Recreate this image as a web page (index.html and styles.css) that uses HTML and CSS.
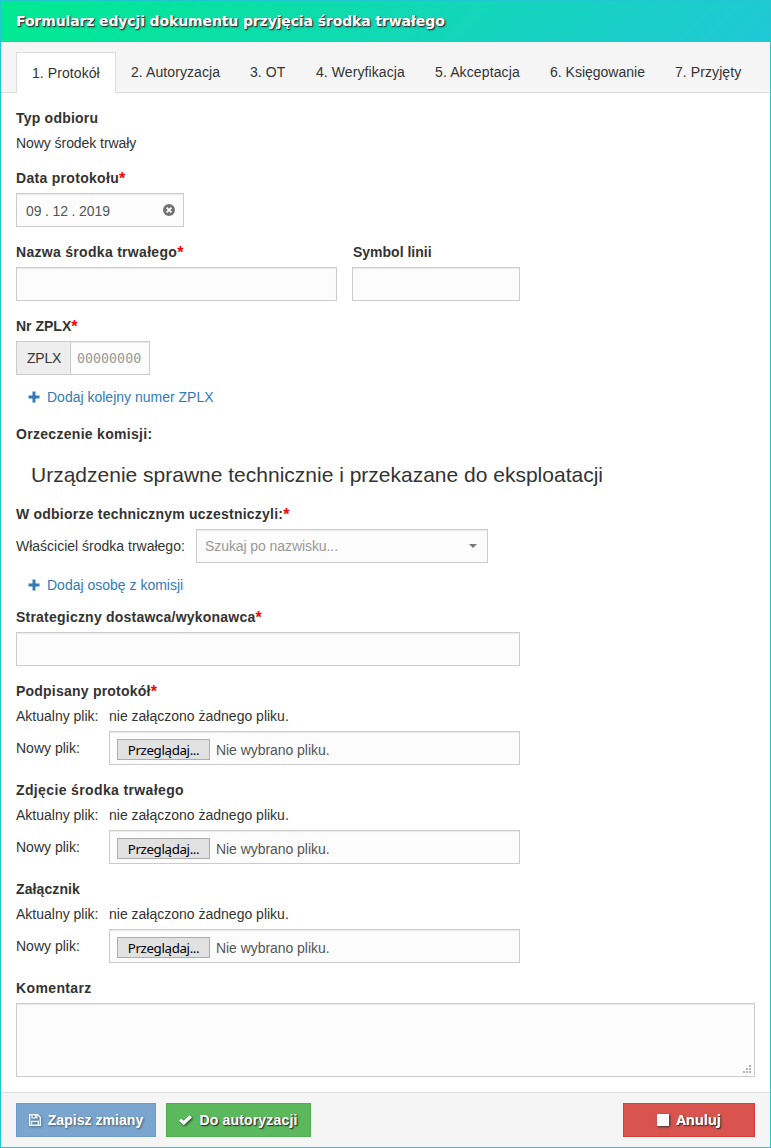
FILE: index.html
```html
<!DOCTYPE html>
<html lang="pl">
<head>
<meta charset="utf-8">
<title>Formularz edycji dokumentu</title>
<link rel="stylesheet" href="styles.css">
</head>
<body>
<form class="panel">
  <header class="panel-heading"><span class="t-title">Formularz edycji dokumentu przyjęcia środka trwałego</span></header>
  <nav class="tabs">
    <a class="tab active">1. Protokół</a>
    <a class="tab">2. Autoryzacja</a>
    <a class="tab ot">3. OT</a>
    <a class="tab">4. Weryfikacja</a>
    <a class="tab accept">5. Akceptacja</a>
    <a class="tab booking">6. Księgowanie</a>
    <a class="tab last">7. Przyjęty</a>
  </nav>
  <main class="panel-body">
    <section class="group">
      <div class="label snug">Typ odbioru</div>
      <div class="static">Nowy środek trwały</div>
    </section>
    <section class="group">
      <div class="label">Data protokołu<b class="req">*</b></div>
      <div class="control date">
        <span class="date-value">09<i>.</i>12<i>.</i>2019</span>
        <svg width="12" height="12" viewBox="0 0 12 12"><circle cx="6" cy="6" r="6" fill="#737373"/><path d="M3.600 3.600l4.800 4.800M8.400 3.600l-4.800 4.800" stroke="#fcfcfc" stroke-width="1.800"/></svg>
      </div>
    </section>
    <div class="columns">
      <section class="group wide">
        <div class="label">Nazwa środka trwałego<b class="req">*</b></div>
        <div class="control"></div>
      </section>
      <section class="group narrow">
        <div class="label symbol">Symbol linii</div>
        <div class="control"></div>
      </section>
    </div>
    <section class="group zplx">
      <div class="label nr">Nr ZPLX<b class="req">*</b></div>
      <div class="input-group">
        <span class="addon">ZPLX</span>
        <div class="control mono">00000000</div>
      </div>
      <a class="link"><svg width="12" height="12" viewBox="0 0 12 12"><path d="M4.500 0.500h3v4h4v3h-4v4h-3v-4h-4v-3h4z" fill="#337ab7"/></svg><span>Dodaj kolejny numer ZPLX</span></a>
    </section>
    <section class="verdict">
      <div class="label">Orzeczenie komisji:</div>
      <p class="lead">Urządzenie sprawne technicznie i przekazane do eksploatacji</p>
    </section>
    <section class="people">
      <div class="label snug">W odbiorze technicznym uczestniczyli:<b class="req">*</b></div>
      <div class="owner">
        <span class="owner-name">Właściciel środka trwałego:</span>
        <div class="control select"><span>Szukaj po nazwisku...</span><i class="caret"></i></div>
      </div>
      <a class="link"><svg width="12" height="12" viewBox="0 0 12 12"><path d="M4.500 0.500h3v4h4v3h-4v4h-3v-4h-4v-3h4z" fill="#337ab7"/></svg><span>Dodaj osobę z komisji</span></a>
    </section>
    <section class="group medium">
      <div class="label snug">Strategiczny dostawca/wykonawca<b class="req">*</b></div>
      <div class="control"></div>
    </section>
    <section class="group medium">
      <div class="label snug">Podpisany protokół<b class="req">*</b></div>
      <div class="file-row"><span class="key">Aktualny plik:</span><span class="none">nie załączono żadnego pliku.</span></div>
      <div class="file-row"><span class="key">Nowy plik:</span><div class="control file"><span class="browse">Przeglądaj...</span><span>Nie wybrano pliku.</span></div></div>
    </section>
    <section class="group medium">
      <div class="label loose">Zdjęcie środka trwałego</div>
      <div class="file-row"><span class="key">Aktualny plik:</span><span class="none">nie załączono żadnego pliku.</span></div>
      <div class="file-row"><span class="key">Nowy plik:</span><div class="control file"><span class="browse">Przeglądaj...</span><span>Nie wybrano pliku.</span></div></div>
    </section>
    <section class="group medium">
      <div class="label tight">Załącznik</div>
      <div class="file-row"><span class="key">Aktualny plik:</span><span class="none">nie załączono żadnego pliku.</span></div>
      <div class="file-row"><span class="key">Nowy plik:</span><div class="control file"><span class="browse">Przeglądaj...</span><span>Nie wybrano pliku.</span></div></div>
    </section>
    <section class="group">
      <div class="label loose">Komentarz</div>
      <div class="control area"><svg width="8" height="8" viewBox="0 0 8 8" fill="#b4b4b4"><path d="M6 0h2v2h-2zM3 3h2v2h-2zM6 3h2v2h-2zM0 6h2v2h-2zM3 6h2v2h-2zM6 6h2v2h-2z"/></svg></div>
    </section>
  </main>
  <footer class="panel-footer">
    <a class="btn save"><svg width="12" height="12" viewBox="0 0 12 12"><path d="M.7.7h8l2.600 2.600v8H.7z" fill="none" stroke="#eef4f9" stroke-width="1.400"/><path d="M3 .7v3.200h5V.7M2.700 11.300v-4h6.600v4" fill="none" stroke="#eef4f9" stroke-width="1.200"/><path d="M5.800 1h1.700v2.500H5.800z" fill="#eef4f9"/></svg><span>Zapisz zmiany</span></a>
    <a class="btn send"><svg width="13" height="10" viewBox="0 0 13 10"><path d="M1.100 4.600l3.700 3.400L11.900 1.300" fill="none" stroke="#fff" stroke-width="3.200"/></svg><span>Do autoryzacji</span></a>
    <a class="btn cancel"><i class="square"></i><span>Anuluj</span></a>
  </footer>
</form>
</body>
</html>
```

FILE: styles.css
```css
* { box-sizing: border-box; }
body { margin: 0; background: #fff; color: #333; font: 14px/20px "Liberation Sans", Arial, sans-serif; }
svg { display: block; flex: none; }
.panel { width: 771px; height: 1148px; display: flex; flex-direction: column; border: 1px solid #20c8d2; }
.panel-heading { height: 41px; padding: 10px 15px; background: linear-gradient(135deg, #00ea90, #20c8d6); color: #fff; font: bold 14px/20px "DejaVu Sans", sans-serif; letter-spacing: -.12px; text-shadow: 1px 1px 1px #333, 1px 1px 2px rgba(51,51,51,.6); white-space: nowrap; }
.tabs { height: 51px; display: flex; align-items: flex-end; padding-left: 15px; background: #f5f5f5; border-bottom: 1px solid #ddd; white-space: nowrap; }
.tab { flex: none; height: 40px; width: 119px; padding: 10px 0 10px 15px; letter-spacing: .08px; }
.tab.active { width: 100px; height: 41px; margin-bottom: -1px; background: #fff; border: 1px solid #ddd; border-bottom: 0; }
.tab.ot { width: 66px; }
.tab.accept { width: 115px; letter-spacing: .12px; }
.tab.booking { width: 125px; letter-spacing: 0; }
.tab.last { width: auto; }
.panel-body { flex: 1; padding: 15px 15px 0; white-space: nowrap; }
.group { margin-bottom: 15px; }
.label { height: 20px; margin-bottom: 5px; font-weight: bold; letter-spacing: .3px; }
.label.snug { letter-spacing: .22px; }
.label.loose { letter-spacing: .37px; }
.label.nr { letter-spacing: 0; }
.label.symbol { padding-left: 1px; letter-spacing: 0; }
.label.tight { letter-spacing: .1px; }
.static { letter-spacing: -.06px; }
.req { color: #f00; font-size: 16px; line-height: 1; letter-spacing: 0; vertical-align: -1px; }
.control { height: 34px; border: 1px solid #ccc; background: #fcfcfc; box-shadow: inset 0 1px 1px rgba(0,0,0,.075); }
.date { width: 168px; display: flex; align-items: center; justify-content: space-between; padding: 2px 8px 0 9px; color: #555; }
.date svg { margin-top: -3px; }
.date i { font-style: normal; padding: 0 3.500px; }
.columns { display: flex; gap: 15px; }
.wide { width: 321px; }
.narrow { width: 168px; }
.medium { width: 504px; }
.input-group { display: flex; width: 134px; }
.addon { flex: none; width: 55px; height: 34px; padding: 6px 10px; background: #eee; border: 1px solid #ccc; letter-spacing: -.2px; }
.mono { flex: none; width: 80px; margin-left: -1px; padding: 7px 6px; color: #999; font: 13.330px/20px "DejaVu Sans Mono", monospace; }
.link { display: flex; align-items: center; gap: 7px; height: 20px; margin: 12px 0 0 12px; color: #337ab7; }
.verdict { margin-top: 17px; }
.lead { margin: 20px 0 0 15px; height: 22px; font-size: 21px; line-height: 22px; }
.people { margin-top: 18px; margin-bottom: 12px; }
.owner { display: flex; align-items: center; }
.owner-name { width: 180px; }
.select { width: 292px; display: flex; align-items: center; justify-content: space-between; padding: 0 10px 0 8px; color: #999; letter-spacing: -.08px; }
.caret { border: 4px solid transparent; border-top-color: #777; border-bottom: 0; }
.file-row { display: flex; align-items: center; }
.file-row + .file-row { margin-top: 5px; }
.key { width: 93px; }
.file { flex: 1; display: flex; align-items: center; gap: 6px; padding: 3px 7px 0; color: #555; letter-spacing: -.05px; }
.browse { width: 93px; height: 21px; border: 1px solid #adadad; background: #e1e1e1; color: #000; font: 13.330px/20px "Noto Sans", sans-serif; letter-spacing: -.36px; text-align: center; }
.area { height: 74px; display: flex; align-items: flex-end; justify-content: flex-end; padding: 3px; }
.panel-footer { display: flex; gap: 10px; height: 55px; padding: 10px 15px; background: #f5f5f5; border-top: 1px solid #ddd; }
.btn { display: flex; align-items: center; justify-content: center; gap: 7px; height: 34px; border: 1px solid; color: #fff; font-weight: bold; text-shadow: 1px 1px 1px #333, 1px 1px 2px rgba(51,51,51,.5); white-space: nowrap; }
.btn svg { filter: drop-shadow(1px 1px 1px rgba(0,0,0,.7)); }
.save { width: 140px; background: #79a5ce; border-color: #6d9aca; text-shadow: 1px 1px 2px #4a5b6c; letter-spacing: .05px; }
.save svg { filter: drop-shadow(1px 1px 1px rgba(0,0,0,.35)); }
.send { width: 145px; background: #5cb85c; border-color: #4cae4c; letter-spacing: .17px; }
.cancel { width: 132px; margin-left: auto; background: #d9534f; border-color: #d43f3a; font-family: "Noto Sans", sans-serif; letter-spacing: -.15px; }
.square { width: 12px; height: 12px; background: #fff; box-shadow: 1px 1px 2px #333; }
```
